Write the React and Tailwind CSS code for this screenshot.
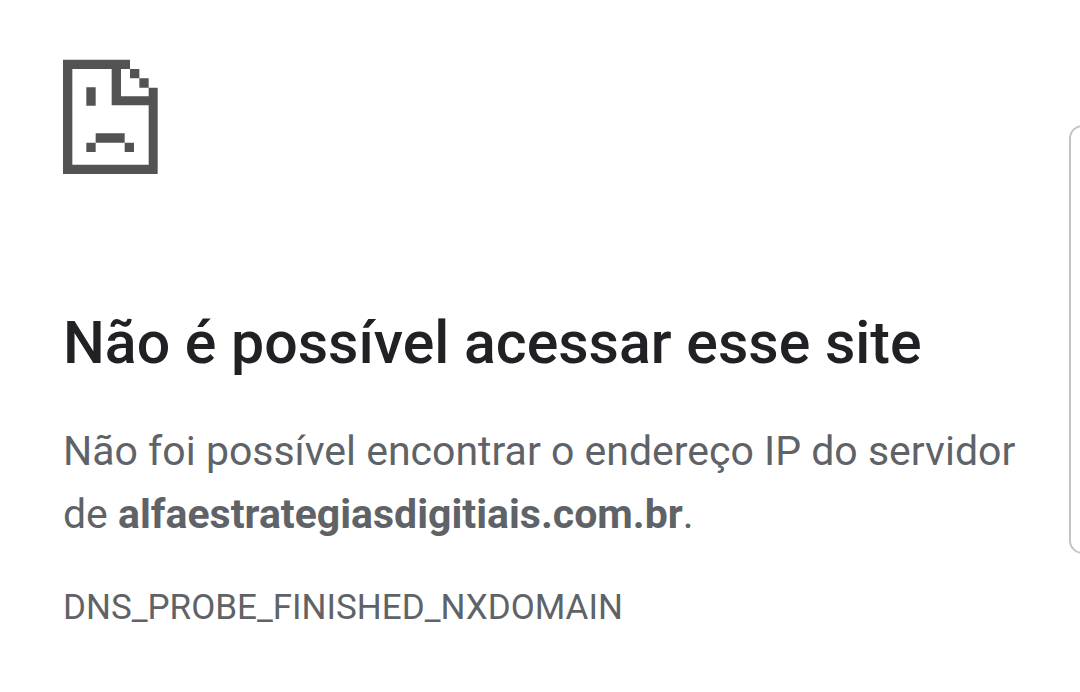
function SadPageIcon() {
  return (
    <svg className="h-[115px] w-[95px] shrink-0 text-[#535353]" viewBox="0 0 285 345" fill="currentColor" aria-hidden="true">
      <path
        d="M0 2H201V30H229V58H257V86H284V345H0ZM28 30V317H257V139H146V30ZM174 30V112H257V86H229V58H201V30Z"
        fillRule="evenodd"
      />
      <path d="M70 85H98V140H70ZM98 223H185V251H98ZM70 251H98V279H70ZM185 251H213V279H185Z" />
    </svg>
  );
}

export default function App() {
  return (
    <div className="flex min-h-screen overflow-hidden bg-white font-['Roboto',sans-serif] text-[#5f6368]">
      <main className="min-w-0 flex-1 pt-[59px] pl-[63px]">
        <SadPageIcon />
        <h1 className="mt-[133px] text-[59px] leading-[72px] font-medium text-[#202124]">
          Não é possível acessar esse site
        </h1>
        <p className="mt-[41px] text-[41px] leading-[63px]">
          Não foi possível encontrar o endereço IP do servidor de{" "}
          <strong className="font-bold">alfaestrategiasdigitiais.com.br</strong>.
        </p>
        <p className="mt-[34px] text-[35px] leading-[56px]">DNS_PROBE_FINISHED_NXDOMAIN</p>
      </main>
      <aside className="-mr-4 mt-[125px] h-[429px] w-[27px] shrink-0 rounded-2xl border-2 border-[#c4c4c4]" aria-hidden="true" />
    </div>
  );
}
